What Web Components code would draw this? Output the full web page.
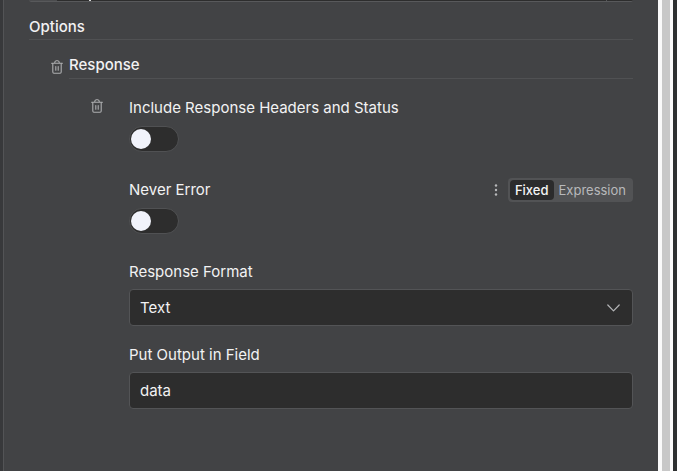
<!DOCTYPE html>
<html lang="en">
<head>
<meta charset="utf-8">
<meta name="viewport" content="width=device-width, initial-scale=1">
<title>Node options</title>
<style>
    html, body { height: 100%; }
    body {
        margin: 0;
        overflow: hidden;
        background: #2e3031;
        color: #f2f2f3;
        font: 15px/20px Inter, "Liberation Sans", sans-serif;
        --panel: #424345;
        --field: #2d2d2d;
        --line: #505153;
        --icon: #adaeb0;
    }
</style>
</head>
<body>
<node-panel>
    <cut-field slot="top"></cut-field>
    <option-section heading="Options">
        <option-group heading="Response">
            <option-row removable label="Include Response Headers and Status">
                <toggle-switch label="Include Response Headers and Status"></toggle-switch>
            </option-row>
            <option-row label="Never Error">
                <mode-switch slot="actions"></mode-switch>
                <toggle-switch label="Never Error"></toggle-switch>
            </option-row>
            <option-row label="Response Format">
                <select-field label="Response Format" value="Text"></select-field>
            </option-row>
            <option-row label="Put Output in Field">
                <text-field label="Put Output in Field" value="data"></text-field>
            </option-row>
        </option-group>
    </option-section>
</node-panel>

<script>
// Shared by every component: open shadow root with the given markup
class BaseElement extends HTMLElement {
    constructor() {
        super();
        this.attachShadow({ mode: 'open' });
    }
    connectedCallback() {
        this.shadowRoot.innerHTML = this.render();
    }
    attr(name) {
        return this.getAttribute(name) || '';
    }
}

// --- Component: Scrolling panel with its scrollbar track ---
class NodePanel extends BaseElement {
    render() {
        return `
            <style>
                :host { display: flex; height: 100%; box-sizing: border-box; padding: 0 4px 0 3px; background: linear-gradient(90deg, #38393b 3px, transparent 3px); }
                main { flex: 1; min-width: 0; background: var(--panel); border-left: 1px solid #535456; padding: 0 25px; }
                .track { width: 8px; background: #c8c8c8; border: solid #fafafa; border-width: 0 3px 0 4px; }
            </style>
            <main><slot name="top"></slot><slot></slot></main>
            <div class="track"></div>
        `;
    }
}
customElements.define('node-panel', NodePanel);

// --- Component: Bottom edge of the field scrolled out above ---
class CutField extends BaseElement {
    render() {
        return `
            <style>
                :host { display: block; height: 2px; overflow: hidden; }
                .field { display: flex; height: 1px; background: var(--field); border-bottom: 1px solid #58595b; border-radius: 0 0 3px 3px; }
                .tag { width: 28px; background: #4b4c4e; }
                .stem { width: 2px; margin-left: 32px; background: #d8d8d9; }
                .end { width: 26px; margin-left: auto; border-left: 1px solid #58595b; }
            </style>
            <div class="field"><div class="tag"></div><div class="stem"></div><div class="end"></div></div>
        `;
    }
}
customElements.define('cut-field', CutField);

// --- Component: Titled section ---
class OptionSection extends BaseElement {
    render() {
        return `
            <style>
                :host { display: block; padding-top: 15px; }
                h2 { margin: 0 0 15px; padding-bottom: 2px; font-size: 15px; font-weight: 500; border-bottom: 1px solid var(--line); }
            </style>
            <h2>${this.attr('heading')}</h2>
            <slot></slot>
        `;
    }
}
customElements.define('option-section', OptionSection);

// --- Component: Delete button with trash icon ---
class TrashButton extends BaseElement {
    render() {
        return `
            <style>
                :host { display: block; width: 12px; height: 14px; }
                button { display: block; padding: 0; border: 0; background: none; color: var(--icon); }
                svg { display: block; }
            </style>
            <button type="button" aria-label="Delete">
                <svg width="12" height="14" viewBox="0 0 12 14" fill="none" stroke="currentColor" stroke-width="1.1" stroke-linecap="round" stroke-linejoin="round">
                    <path d="M.6 3.3h10.8M3.6 3.1q.2-2.3 1.6-2.3h1.6q1.4 0 1.6 2.3M1.8 3.5v8.6q0 1.1 1.1 1.1h6.2q1.1 0 1.1-1.1V3.5M4.8 6.5v3.8M7.2 6.5v3.8"/>
                </svg>
            </button>
        `;
    }
}
customElements.define('trash-button', TrashButton);

// --- Component: Nested group with delete button ---
class OptionGroup extends BaseElement {
    render() {
        return `
            <style>
                :host { display: block; padding-left: 22px; }
                header { display: flex; align-items: center; gap: 6px; }
                h3 { flex: 1; margin: 0; padding-bottom: 3px; font-size: 15px; font-weight: 500; border-bottom: 1px solid var(--line); }
                .rows { display: flex; flex-direction: column; gap: 19px; padding: 19px 0 0 40px; }
            </style>
            <header><trash-button></trash-button><h3>${this.attr('heading')}</h3></header>
            <div class="rows"><slot></slot></div>
        `;
    }
}
customElements.define('option-group', OptionGroup);

// --- Component: One parameter, label above its control ---
class OptionRow extends BaseElement {
    render() {
        return `
            <style>
                :host { display: grid; grid-template-columns: 38px minmax(0, 1fr); }
                trash-button { padding-top: 1px; }
                .body { grid-column: 2; }
                .head { display: flex; justify-content: space-between; align-items: center; height: 20px; margin-bottom: 7px; }
            </style>
            ${this.hasAttribute('removable') ? '<trash-button></trash-button>' : ''}
            <div class="body">
                <div class="head"><span>${this.attr('label')}</span><slot name="actions"></slot></div>
                <slot></slot>
            </div>
        `;
    }
}
customElements.define('option-row', OptionRow);

// --- Component: On/off switch ---
class ToggleSwitch extends BaseElement {
    render() {
        return `
            <style>
                :host { display: block; padding: 1px 0 9px; }
                input { display: block; appearance: none; box-sizing: border-box; width: 50px; height: 26px; margin: 0; padding: 2px 1px; background: var(--field); border: 1px solid #505153; border-radius: 13px; }
                input::before { content: ""; display: block; width: 20px; height: 20px; border-radius: 50%; background: #f1f3fb; }
                input:checked::before { margin-left: auto; }
            </style>
            <input type="checkbox" role="switch" aria-label="${this.attr('label')}">
        `;
    }
}
customElements.define('toggle-switch', ToggleSwitch);

// --- Component: Menu dots and Fixed / Expression buttons ---
class ModeSwitch extends BaseElement {
    render() {
        return `
            <style>
                :host { display: flex; align-items: center; gap: 10px; }
                button { border: 0; background: none; color: #b8b9bb; font: 13px/20px Inter, "Liberation Sans", sans-serif; }
                svg { display: block; }
                .menu { padding: 0; }
                .modes { display: flex; padding: 2px; background: #525355; border-radius: 4px; }
                .modes button { padding: 0 5px; border-radius: 4px; }
                .modes [aria-pressed="true"] { background: #2b2b2c; color: #f4f4f5; font-weight: 500; }
            </style>
            <button class="menu" type="button" aria-label="More actions">
                <svg width="4" height="12" viewBox="0 0 4 12" fill="currentColor"><circle cx="2" cy="1.5" r="1.2"/><circle cx="2" cy="6" r="1.2"/><circle cx="2" cy="10.5" r="1.2"/></svg>
            </button>
            <div class="modes">
                <button type="button" aria-pressed="true">Fixed</button>
                <button type="button" aria-pressed="false">Expression</button>
            </div>
        `;
    }
}
customElements.define('mode-switch', ModeSwitch);

// --- Component: Drop-down ---
class SelectField extends BaseElement {
    render() {
        return `
            <style>
                :host { display: grid; align-items: center; }
                select, svg { grid-area: 1 / 1; }
                select { appearance: none; box-sizing: border-box; width: 100%; height: 37px; margin: 0; padding: 0 10px; font: inherit; color: inherit; background: var(--field); border: 1px solid #535456; border-radius: 4px; }
                svg { justify-self: end; margin-right: 13px; pointer-events: none; }
            </style>
            <select aria-label="${this.attr('label')}"><option>${this.attr('value')}</option></select>
            <svg width="13" height="8" viewBox="0 0 13 8" fill="none" stroke="#b4b5b7" stroke-width="1.2" stroke-linecap="round" stroke-linejoin="round"><path d="M.8 1l5.7 5.8L12.2 1"/></svg>
        `;
    }
}
customElements.define('select-field', SelectField);

// --- Component: Text box ---
class TextField extends BaseElement {
    render() {
        return `
            <style>
                :host { display: block; }
                input { display: block; box-sizing: border-box; width: 100%; height: 37px; margin: 0; padding: 0 10px; font: inherit; color: inherit; background: var(--field); border: 1px solid #535456; border-radius: 4px; }
            </style>
            <input type="text" aria-label="${this.attr('label')}" value="${this.attr('value')}">
        `;
    }
}
customElements.define('text-field', TextField);
</script>
</body>
</html>
